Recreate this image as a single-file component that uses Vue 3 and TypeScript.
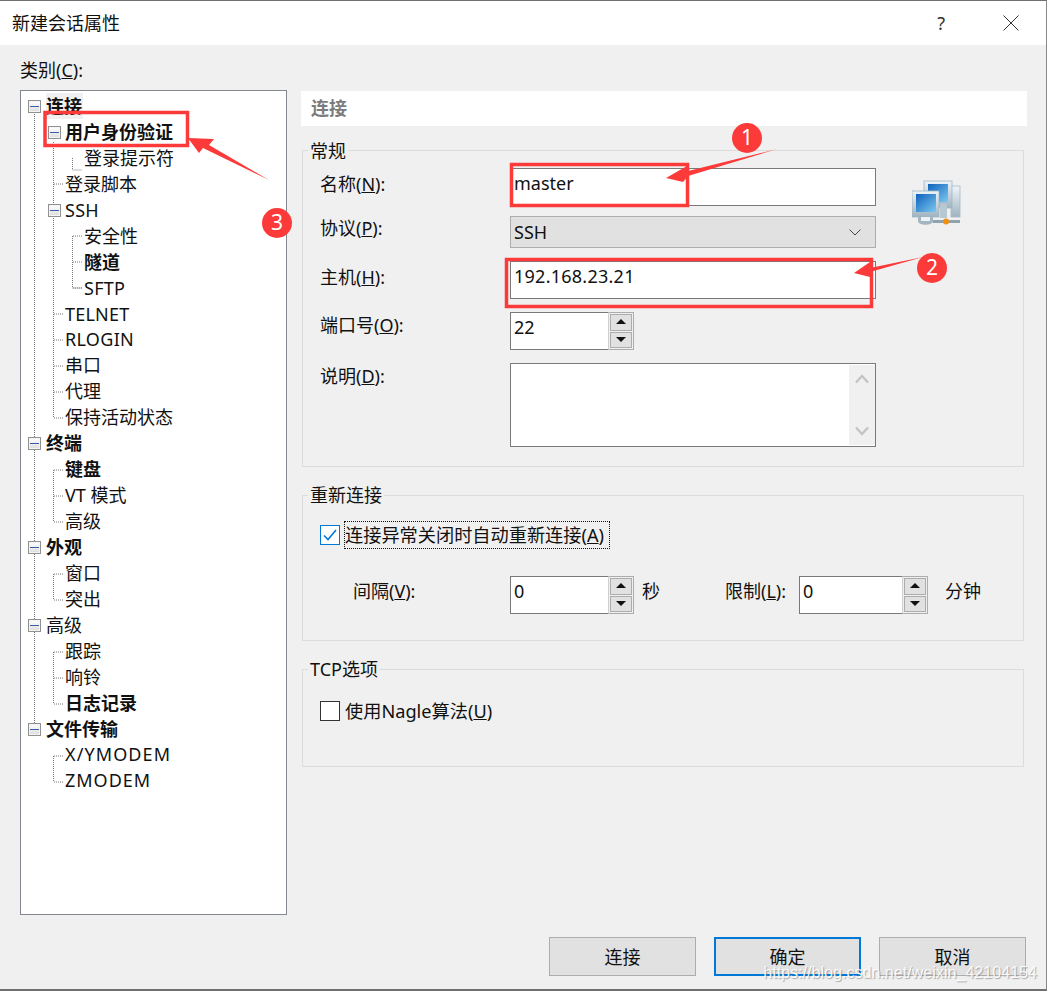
<script setup lang="ts">
interface TreeRow {
  label: string;
  level: number;
  bold?: boolean;
  expander?: boolean;
  selected?: boolean;
  spacing?: number;
}

const treeRows: TreeRow[] = [
  { label: '连接', level: 0, bold: true, expander: true, selected: true },
  { label: '用户身份验证', level: 1, bold: true, expander: true },
  { label: '登录提示符', level: 2 },
  { label: '登录脚本', level: 1 },
  { label: 'SSH', level: 1, expander: true, spacing: 0.3 },
  { label: '安全性', level: 2 },
  { label: '隧道', level: 2, bold: true },
  { label: 'SFTP', level: 2, spacing: 0.25 },
  { label: 'TELNET', level: 1, spacing: 0.2 },
  { label: 'RLOGIN', level: 1, spacing: 0.3 },
  { label: '串口', level: 1 },
  { label: '代理', level: 1 },
  { label: '保持活动状态', level: 1 },
  { label: '终端', level: 0, bold: true, expander: true },
  { label: '键盘', level: 1, bold: true },
  { label: 'VT 模式', level: 1 },
  { label: '高级', level: 1 },
  { label: '外观', level: 0, bold: true, expander: true },
  { label: '窗口', level: 1 },
  { label: '突出', level: 1 },
  { label: '高级', level: 0, expander: true },
  { label: '跟踪', level: 1 },
  { label: '响铃', level: 1 },
  { label: '日志记录', level: 1, bold: true },
  { label: '文件传输', level: 0, bold: true, expander: true },
  { label: 'X/YMODEM', level: 1, spacing: 1.1 },
  { label: 'ZMODEM', level: 1, spacing: 1 }
];

const guides = 'M13.5 22V638 M32.5 50V326 M32.5 378V430 M32.5 482V508 M32.5 560V612 M32.5 664V690 M51.5 66V78H61 M51.5 144V196H61';
const ticks = 'M33 92H43 M33 222H43 M33 248H43 M33 274H43 M33 300H43 M33 326H43 M33 378H43 M33 404H43 M33 430H43 M33 482H43 M33 508H43 M33 560H43 M33 586H43 M33 612H43 M33 664H43 M33 690H43 M52 144H61 M52 170H61 M52 196H61';
</script>

<template>
  <div class="dialog">
    <header class="titlebar">
      <span class="title">新建会话属性</span>
      <span class="help">?</span>
      <svg class="close" width="16" height="16" viewBox="0 0 16 16">
        <path d="M.5 .5L15.5 15.5M15.5 .5L.5 15.5" stroke="#333" fill="none" />
      </svg>
    </header>

    <div class="body">
      <aside class="nav">
        <div class="nav-label">类别(<u>C</u>):</div>
        <div class="tree">
          <svg class="tree-lines" width="100" height="720">
            <path :d="guides" stroke="#777" stroke-dasharray="1 1" fill="none" />
            <path :d="ticks" stroke="#777" stroke-dasharray="1 1" fill="none" />
          </svg>
          <div
            v-for="row in treeRows"
            :key="row.label + row.level"
            class="tree-row"
            :class="['level-' + row.level, { bold: row.bold }]"
          >
            <span v-if="row.expander" class="expander"><i></i></span>
            <span
              class="tree-text"
              :class="{ selected: row.selected }"
              :style="row.spacing ? { letterSpacing: row.spacing + 'px' } : undefined"
            >{{ row.label }}</span>
          </div>
        </div>
      </aside>

      <main class="page">
        <div class="page-title">连接</div>

        <fieldset class="group general">
          <legend>常规</legend>
          <div class="form">
            <label>名称(<u>N</u>):</label>
            <div class="input wide h38">master</div>
            <label class="label-select">协议(<u>P</u>):</label>
            <div class="select">
              <span>SSH</span>
              <svg width="12" height="7" viewBox="0 0 12 7">
                <path d="M.5 .5L6 6L11.5 .5" stroke="#444" fill="none" />
              </svg>
            </div>
            <label>主机(<u>H</u>):</label>
            <div class="input wide h38 host">192.168.23.21</div>
            <label class="label-port">端口号(<u>O</u>):</label>
            <div class="spin">
              <div class="input spin-input">22</div>
              <div class="spin-btns">
                <button class="up"></button>
                <button class="down"></button>
              </div>
            </div>
            <label class="label-port">说明(<u>D</u>):</label>
            <div class="input wide memo">
              <div class="memo-bar">
                <svg width="14" height="10" viewBox="0 0 14 10"><path d="M1 8.5L7 2L13 8.5" stroke="#c4c4c4" stroke-width="2.4" fill="none" /></svg>
                <svg width="14" height="10" viewBox="0 0 14 10"><path d="M1 1.5L7 8L13 1.5" stroke="#c4c4c4" stroke-width="2.4" fill="none" /></svg>
              </div>
            </div>
          </div>
          <svg class="net-icon" width="50" height="50" viewBox="0 0 50 50">
            <defs>
              <linearGradient id="scr" x1="0" y1="0" x2="1" y2="1">
                <stop offset="0" stop-color="#0f62bd" />
                <stop offset="1" stop-color="#7cc8f0" />
              </linearGradient>
              <linearGradient id="shell" x1="0" y1="0" x2="0" y2="1">
                <stop offset="0" stop-color="#eef5f9" />
                <stop offset="1" stop-color="#9fb3c0" />
              </linearGradient>
            </defs>
            <rect x="39" y="6" width="9" height="31" fill="url(#shell)" stroke="#a8bac5" stroke-width=".8" />
            <rect x="12" y="1" width="28" height="27" fill="url(#shell)" stroke="#9fb4c0" stroke-width=".8" />
            <rect x="16" y="4" width="20" height="18" fill="url(#scr)" />
            <rect x="28" y="24" width="7" height="14" fill="#b8c8d2" />
            <rect x="21" y="40" width="27" height="3" fill="#8fa2ad" />
            <rect x="0" y="11" width="27" height="26" fill="url(#shell)" stroke="#9fb4c0" stroke-width=".8" />
            <rect x="4" y="14" width="20" height="18" fill="url(#scr)" />
            <path d="M6 37h15v4c0 5-15 5-15 0z" fill="#a3b5c0" />
            <rect x="9" y="37" width="9" height="4" fill="#eef3f6" />
            <circle cx="34" cy="41.5" r="3" fill="#ef8f16" />
          </svg>
        </fieldset>

        <fieldset class="group reconnect">
          <legend>重新连接</legend>
          <div class="check-row">
            <span class="checkbox checked">
              <svg width="14" height="12" viewBox="0 0 14 12"><path d="M1 6.5L5 10.5L13 1" stroke="#0078d7" stroke-width="1.6" fill="none" /></svg>
            </span>
            <span class="focus-text">连接异常关闭时自动重新连接(<u>A</u>)</span>
          </div>
          <div class="interval-row">
            <label class="interval-label">间隔(<u>V</u>):</label>
            <div class="spin">
              <div class="input spin-input">0</div>
              <div class="spin-btns">
                <button class="up"></button>
                <button class="down"></button>
              </div>
            </div>
            <span class="unit">秒</span>
            <label class="limit-label">限制(<u>L</u>):</label>
            <div class="spin spin-long">
              <div class="input spin-input">0</div>
              <div class="spin-btns">
                <button class="up"></button>
                <button class="down"></button>
              </div>
            </div>
            <span class="unit unit-min">分钟</span>
          </div>
        </fieldset>

        <fieldset class="group tcp">
          <legend>TCP选项</legend>
          <div class="check-row">
            <span class="checkbox"></span>
            <span class="plain-text">使用Nagle算法(<u>U</u>)</span>
          </div>
        </fieldset>
      </main>
    </div>

    <footer class="footer">
      <button class="btn">连接</button>
      <button class="btn primary">确定</button>
      <button class="btn">取消</button>
    </footer>

    <svg class="marks" width="1047" height="991" viewBox="0 0 1047 991">
      <g fill="none" stroke="#fc3a3a" stroke-width="3.5">
        <rect x="45" y="112.5" width="142.5" height="33" />
        <rect x="511.5" y="164.5" width="176" height="41" />
        <rect x="506.5" y="259.5" width="365" height="47" />
      </g>
      <g fill="#fc3a3a">
        <path d="M188 138L214 139L209 145L269 180L203 148L199 153Z" />
        <path d="M666 178L687 166L688 171L777 149L688 176L683 182Z" />
        <path d="M854 273L870 262L870 268L923 257L870 272L870 277Z" />
        <circle cx="277" cy="223" r="15" />
        <circle cx="747" cy="138" r="15" />
        <circle cx="932" cy="268" r="15" />
      </g>
      <g class="mark-num" fill="#fff" text-anchor="middle">
        <text x="277" y="230">3</text>
        <text x="747" y="145">1</text>
        <text x="932" y="275">2</text>
      </g>
    </svg>
    <div class="watermark">https://blog.csdn.net/weixin_42104154</div>
  </div>
</template>

<style>
html, body {
  margin: 0;
  background: #f0f0f0;
}
</style>

<style scoped>
.dialog {
  position: relative;
  box-sizing: border-box;
  width: 1047px;
  height: 991px;
  overflow: hidden;
  background: #f0f0f0;
  border-top: 1px solid #6f6f6f;
  border-right: 1px solid #8a8a8a;
  border-bottom: 2px solid #6f6f6f;
  color: #111;
  font: 18px/26px "Noto Sans", "Noto Sans CJK SC", sans-serif;
}

.titlebar {
  display: flex;
  align-items: center;
  height: 44px;
  padding: 0 27px 0 12px;
  background: #fff;
}

.title {
  flex: 1;
}

.help {
  margin-right: 58px;
  color: #333;
}

.body {
  display: flex;
  height: 870px;
}

.nav {
  width: 267px;
  margin-left: 20px;
  padding-top: 12px;
}

.nav-label {
  height: 33px;
  line-height: 26px;
}

.tree {
  position: relative;
  box-sizing: border-box;
  width: 267px;
  height: 825px;
  padding-top: 2px;
  background: #fff;
  border: 1px solid #828790;
}

.tree-lines {
  position: absolute;
  left: 0;
  top: 1px;
}

.tree-row {
  position: relative;
  height: 25.95px;
  line-height: 26px;
  white-space: nowrap;
}

.level-0 { padding-left: 25px; }
.level-1 { padding-left: 44px; }
.level-2 { padding-left: 63px; }

.tree-text {
  position: relative;
  display: inline-block;
  height: 26px;
}

.tree-text.selected {
  background: #f0f0f0;
  padding: 0 1px 0 0;
}

.bold {
  font-weight: 700;
}

.expander {
  position: absolute;
  top: 7px;
  width: 11px;
  height: 11px;
  background: linear-gradient(#fff, #dcdcdc);
  border: 1px solid #919191;
  box-shadow: inset 0 0 0 1px #f4f4f4;
}

.level-0 .expander { left: 7px; }
.level-1 .expander { left: 27px; }

.expander i {
  position: absolute;
  left: 1px;
  right: 1px;
  top: 5px;
  height: 1px;
  background: #3a5ea8;
}

.page {
  width: 726px;
  margin-left: 14px;
  padding-top: 46px;
}

.page-title {
  box-sizing: border-box;
  height: 35px;
  padding-left: 10px;
  line-height: 35px;
  background: #fff;
  color: #7c7c7c;
  font-weight: 700;
}

.group {
  position: relative;
  box-sizing: border-box;
  width: 722px;
  margin: 0 0 0 1px;
  padding: 0;
  border: 1px solid #dcdcdc;
}

.group legend {
  margin-left: 5px;
  padding: 0 2px;
  line-height: 26px;
}

.general legend {
  position: relative;
  top: 1px;
}

.general {
  height: 330px;
  margin-top: 11px;
}

.reconnect {
  height: 159px;
  margin-top: 15px;
}

.tcp {
  height: 111px;
  margin-top: 15px;
}

.form {
  display: grid;
  grid-template-columns: 190px 366px;
  grid-template-rows: 38px 29px 38px 38px 84px;
  row-gap: 13px;
  margin-top: 5px;
  padding-left: 17px;
}

.form label {
  line-height: 32px;
}

.form .label-select {
  margin-top: -7px;
}

.form .label-port {
  margin-top: -3px;
}

.input {
  box-sizing: border-box;
  padding: 0 3px;
  background: #fff;
  border: 1px solid #7a7a7a;
  line-height: 28px;
  white-space: nowrap;
}

.wide {
  width: 366px;
}

.h38 {
  height: 38px;
}

.host {
  letter-spacing: .25px;
}

.select {
  display: flex;
  align-items: center;
  justify-content: space-between;
  box-sizing: border-box;
  width: 366px;
  height: 32px;
  margin-top: -3px;
  padding: 0 14px 0 3px;
  background: #e1e1e1;
  border: 1px solid #adadad;
}

.spin {
  display: flex;
  width: 124px;
  height: 38px;
}

.spin-input {
  flex: 1;
  height: 38px;
  border-right: 0;
}

.spin-long {
  width: 129px;
}

.spin-btns {
  display: flex;
  flex-direction: column;
  gap: 1px;
  box-sizing: border-box;
  width: 26px;
  height: 38px;
  padding: 1px;
  border: 1px solid #adadad;
  border-left-color: #cfcfcf;
}

.spin-btns button {
  position: relative;
  flex: 1;
  padding: 0;
  background: #e1e1e1;
  border: 1px solid #adadad;
}

.spin-btns button::after {
  content: "";
  position: absolute;
  left: 5px;
  top: 4px;
  border-left: 5px solid transparent;
  border-right: 5px solid transparent;
}

.spin-btns .up::after {
  border-bottom: 5px solid #111;
}

.spin-btns .down::after {
  border-top: 5px solid #111;
}

.memo {
  position: relative;
  height: 84px;
}

.memo-bar {
  position: absolute;
  top: 1px;
  right: 0;
  bottom: 1px;
  display: flex;
  flex-direction: column;
  align-items: center;
  justify-content: space-between;
  box-sizing: border-box;
  width: 26px;
  padding: 9px 0 9px;
  background: #f0f0f0;
}

.net-icon {
  position: absolute;
  left: 609px;
  top: 17px;
  filter: blur(.4px);
}

.check-row {
  display: flex;
  align-items: center;
  height: 28px;
  margin-top: 13px;
  padding-left: 17px;
}

.tcp .check-row {
  margin-top: 15px;
}

.checkbox {
  display: flex;
  align-items: center;
  justify-content: center;
  box-sizing: border-box;
  width: 20px;
  height: 20px;
  margin-right: 5px;
  background: #fff;
  border: 1px solid #333;
}

.checkbox.checked {
  border-color: #0078d7;
}

.focus-text {
  padding-right: 5px;
  outline: 1px dotted #111;
  line-height: 26px;
  font-size: 18.2px;
}

.plain-text {
  font-size: 18.2px;
}

.interval-row {
  display: flex;
  align-items: flex-start;
  margin-top: 27px;
  padding-left: 50px;
}

.interval-label {
  width: 157px;
  line-height: 30px;
}

.unit {
  margin-left: 8px;
  line-height: 30px;
}

.limit-label {
  width: 74px;
  margin-left: 65px;
  line-height: 30px;
}

.unit-min {
  margin-left: 17px;
}

.footer {
  display: flex;
  gap: 18px;
  justify-content: flex-end;
  padding: 22px 20px 0 0;
}

.btn {
  box-sizing: border-box;
  width: 147px;
  height: 39px;
  padding: 0;
  background: #e1e1e1;
  border: 1px solid #adadad;
  color: #111;
  font: inherit;
}

.btn.primary {
  border: 2px solid #0078d7;
}

.marks {
  position: absolute;
  left: 0;
  top: -1px;
  pointer-events: none;
}

.mark-num {
  font: 21px "Noto Sans", sans-serif;
}

.watermark {
  position: absolute;
  right: 9px;
  bottom: 8px;
  color: rgba(255, 255, 255, .9);
  text-shadow: 1px 1px 1px rgba(110, 110, 110, .55);
  font: 16.1px/18px "Liberation Sans", sans-serif;
  white-space: nowrap;
}
</style>
